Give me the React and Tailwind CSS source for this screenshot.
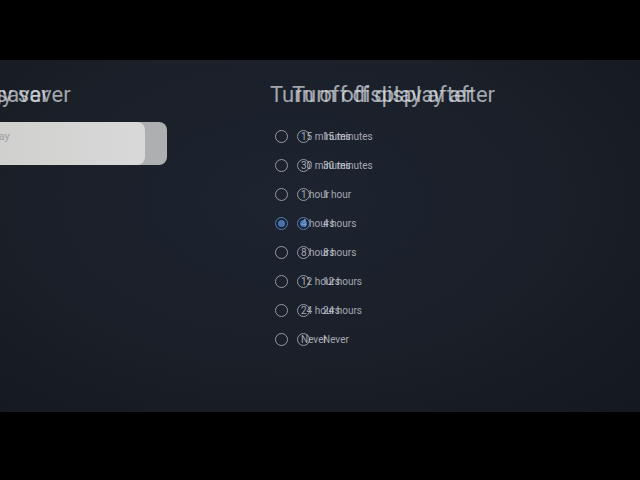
const options = ['15 minutes', '30 minutes', '1 hour', '4 hours', '8 hours', '12 hours', '24 hours', 'Never'];

function Radio({ checked }) {
  if (checked) {
    return (
      <span className="w-[13px] h-[13px] rounded-full border-[1.5px] border-[#6aa2ee] flex items-center justify-center shrink-0">
        <span className="w-[7px] h-[7px] rounded-full bg-[#5b95e6]" />
      </span>
    );
  }
  return <span className="w-[13px] h-[13px] rounded-full border-[1.5px] border-[#c9cdd2] shrink-0" />;
}

// one frame of the settings page; two of these are stacked during the slide
function SettingsPane() {
  return (
    <div className="flex pt-[22px]">
      {/* Left: parent menu, mostly scrolled off */}
      <div className="w-[267px] -ml-[100px] shrink-0">
        <h1 className="pl-[46px] text-[22px] leading-[26px] text-[#dcdfe3] whitespace-nowrap">Energy saver</h1>
        <div className="mt-[14px] h-[43px] rounded-lg bg-[linear-gradient(90deg,#dcdcda,#ececea)] pl-[34px] pt-[8px] text-[11px] leading-[14px] text-[#9a9ca0] whitespace-nowrap">
          Turn off display
        </div>
      </div>

      {/* Right: options */}
      <div className="ml-[125px] w-[260px] shrink-0">
        <h2 className="text-[22px] leading-[26px] text-[#dcdfe3] whitespace-nowrap">Turn off display after</h2>
        <ul className="mt-[14px]">
          {options.map((label) => (
            <li key={label} className="h-[29px] flex items-center gap-[13px] pl-[5px]">
              <Radio checked={label === '4 hours'} />
              <span className="text-[10px] text-[#dcdfe3] whitespace-nowrap">{label}</span>
            </li>
          ))}
        </ul>
      </div>
    </div>
  );
}

export default function App() {
  return (
    <div className="w-[640px] h-[480px] bg-black flex flex-col overflow-hidden" style={{ fontFamily: 'Roboto, "Liberation Sans", sans-serif' }}>
      <div className="h-[60px] shrink-0" />
      <div className="relative h-[352px] shrink-0 overflow-hidden bg-[radial-gradient(ellipse_at_45%_40%,#1d2430_0%,#1a1f28_55%,#14181f_100%)]">
        <div className="opacity-70 -translate-x-[22px]">
          <SettingsPane />
        </div>
        <div className="absolute inset-0 opacity-70">
          <SettingsPane />
        </div>
      </div>
      <div className="flex-1" />
    </div>
  );
}
